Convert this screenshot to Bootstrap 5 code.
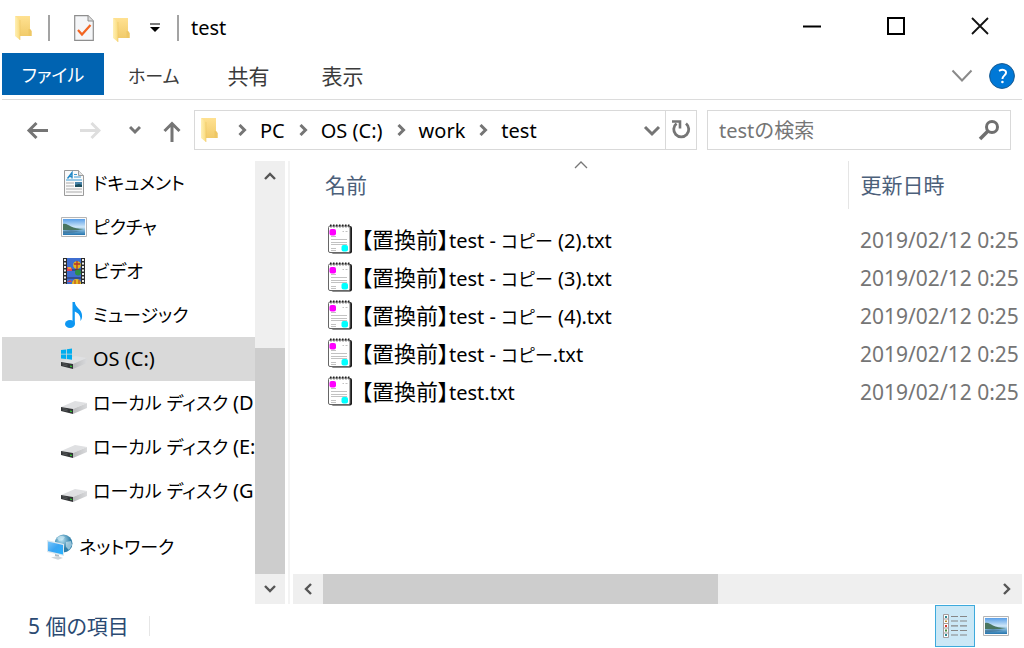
<!DOCTYPE html>
<html lang="ja">
<head>
<meta charset="utf-8">
<meta name="viewport" content="width=device-width, initial-scale=1">
<title>test</title>
<link href="https://cdn.jsdelivr.net/npm/bootstrap@5.3.0/dist/css/bootstrap.min.css" rel="stylesheet">
<style>
  body { font-family: "Noto Sans", "Noto Sans CJK JP", sans-serif; font-size: 20px; line-height: 30px; color: #000; background: #fff; font-feature-settings: "palt"; }
  svg { display: block; flex: none; }
  button { color: inherit; background: none; border: 0; padding: 0; }
  .explorer { padding: 0 2px; }
  .titlebar { height: 53px; padding: 2px 0 0 12px; }
  .title-folder { margin: 4px 18px 0 15px; }
  .rule { width: 2px; height: 26px; background: #a3a3a3; }
  .caption-btn { width: 84px; height: 48px; display: flex; align-items: center; justify-content: center; }
  .ribbon { height: 47px; border-bottom: 1px solid #dcdcdc; color: #3b3b3b; }
  .ribbon a { color: inherit; text-decoration: none; height: 42px; line-height: 46px; }
  .ribbon .file-tab { background: #0063b1; color: #fff; width: 102px; text-align: center; line-height: 44px; }
  .kana { font-size: 18px; }
  .kanji { font-size: 21px; }
  .kanji-wide { font-size: 22px; }
  .latin { font-size: 20px; }
  .address-row { padding: 10px 11px 11px 23px; }
  .nav-buttons { width: 169px; gap: 28px; }
  .boxed { border: 1px solid #d9d9d9; height: 40px; }
  .crumbs { padding-left: 5px; }
  .crumbs a { color: #000; text-decoration: none; padding-top: 2px; }
  .crumbs .sep { margin: 0 12px 0 14px; }
  .refresh { width: 31px; height: 38px; border-left: 1px solid #d9d9d9; display: flex; align-items: center; justify-content: center; }
  .search { width: 304px; padding: 0 10px 0 11px; margin-left: 10px; }
  .search input { border: 0; outline: 0; min-width: 0; background: none; padding: 2px 0 0; color: #000; }
  .search input::placeholder { color: #757575; opacity: 1; }
  .tree { width: 253px; overflow: hidden; }
  .tree a { color: #000; text-decoration: none; height: 44px; display: flex; align-items: center; gap: 6px; padding-left: 59px; white-space: nowrap; }
  .tree a.current { background: #d9d9d9; }
  .tree a.network { margin-top: 12px; padding-left: 45px; }
  .bar { background: #efefef; }
  .bar button { display: flex; align-items: center; justify-content: center; flex: none; width: 30px; height: 30px; }
  .bar-v { width: 30px; }
  .thumb { background: #cdcdcd; }
  .splitter { width: 8px; flex: none; }
  .splitter::before { content: ""; display: block; width: 2px; height: 100%; margin-left: 3px; background: #f3f3f3; }
  .files { table-layout: fixed; width: 100%; white-space: nowrap; margin-bottom: auto; }
  .files th { height: 48px; color: #4c607a; font-weight: 400; padding: 0 0 0 32px; position: relative; }
  .files th.date-col { width: 174px; padding-left: 12px; border-left: 1px solid #e5e5e5; }
  .files td { height: 38px; padding: 0 0 0 34px; }
  .files td span { line-height: 30px; }
  .files .file-name { padding-top: 2px; }
  .files td.date { padding: 2px 0 0 12px; color: #757575; font-size: 21px; }
  .files tbody::before { content: ""; display: block; height: 11px; }
  .sort-mark { position: absolute; top: 0; left: 21px; right: 0; display: flex; justify-content: center; }
  .status { height: 44px; padding-left: 26px; color: #2b4a72; }
  .status .divider { width: 1px; height: 20px; margin-left: 20px; background: #e6e6e6; }
  .views { padding-right: 13px; }
  .view-btn { width: 40px; height: 42px; display: flex; align-items: center; justify-content: center; }
  .view-btn.active { background: #cbe8f6; border: 1px solid #3daadc; }
</style>
</head>
<body>
<svg width="0" height="0" class="position-absolute" aria-hidden="true">
  <defs>
    <linearGradient id="gFold" x1="0" x2="1"><stop offset="0" stop-color="#fff0b5"/><stop offset="1" stop-color="#fadb7d"/></linearGradient>
    <linearGradient id="gBack" x1="0" y1="0" x2="0" y2="1"><stop offset="0" stop-color="#ffe191"/><stop offset="1" stop-color="#f1cb6a"/></linearGradient>
    <linearGradient id="gSky" x1="0" y1="0" x2="0" y2="1"><stop offset="0" stop-color="#5a9fe8"/><stop offset=".5" stop-color="#cfe7f8"/><stop offset=".65" stop-color="#8fc0e0"/><stop offset="1" stop-color="#2474ad"/></linearGradient>
    <linearGradient id="gDisk" x1="0" x2="1"><stop offset="0" stop-color="#b9babc"/><stop offset="1" stop-color="#d9dadc"/></linearGradient>
    <linearGradient id="gScr" x1="0" x2="1" y2="1"><stop offset="0" stop-color="#7cc8fb"/><stop offset=".5" stop-color="#3aa5f3"/><stop offset="1" stop-color="#27b3ff"/></linearGradient>
    <radialGradient id="gGlobe" cx=".4" cy=".3"><stop offset="0" stop-color="#b9e3f3"/><stop offset="1" stop-color="#2f7ea8"/></radialGradient>
    <symbol id="folder" viewBox="0 0 18 26"><path d="M1 1h15v13l1.500 2v5H5z" fill="url(#gBack)"/><path d="M14.500 14h1.500l1.500 2v5h-3z" fill="#eec765"/><path d="M1 1l5 4v20l-5-4z" fill="url(#gFold)"/><path d="M6 5v20" stroke="#ecc767" stroke-width=".6"/></symbol>
    <symbol id="photo" viewBox="0 0 26 20"><path d="M.5.500h25v19H.5z" fill="#fbfbfb" stroke="#b5b5b5"/><path d="M2 2h22v16H2z" fill="url(#gSky)"/><path d="M2 7c3-1 5 1 8 2.500s7 2.500 13 2.500l-6 1H2z" fill="#4a7560"/><path d="M2 14l8-1 10 1-7 1.500L2 16.500z" fill="#376483" opacity=".5"/></symbol>
    <symbol id="disk" viewBox="0 0 26 14"><path d="M0 7l14-6 12 2-14 6z" fill="#dfe0e2"/><path d="M12 9l14-6v5l-14 6z" fill="url(#gDisk)"/><path d="M0 7l12 2v5L0 11z" fill="#333537"/><path d="M1.500 8.500l5 1M1.500 10l5 1" stroke="#66696b" stroke-width=".6"/><path d="M9 10.500l2 .4v1.200l-2-.4z" fill="#2ed12e"/></symbol>
    <symbol id="note" viewBox="0 0 26 30"><rect x="4" y="2" width="21" height="27.500" rx="2" fill="#1b1b1b"/><rect x="1.500" y="2" width="21.500" height="26.500" rx="1.500" fill="#fff" stroke="#666"/><path d="M3 1.500h21" stroke="#222" stroke-width="2" stroke-dasharray="1.500 1.500"/><path d="M3.500 3.500h20" stroke="#999" stroke-dasharray="1 2"/><rect x="2.500" y="5" width="6.500" height="6.500" rx="2" fill="#f0f"/><rect x="14.500" y="21" width="6.500" height="6.500" rx="2" fill="#0ff"/><path d="M15.500 7.500H17m1.500 0h2M4 12.500h5M4 15.500h16M4 18.500h16M4 20.500h16M4 24.500h5M4 26.500h5" stroke="#c2c2c2"/></symbol>
    <symbol id="chev" viewBox="0 0 10 12"><path d="M1.500 1l5 5-5 5" fill="none" stroke="#757575" stroke-width="3"/></symbol>
  </defs>
</svg>

<div class="explorer d-flex flex-column vh-100">
  <header class="titlebar d-flex align-items-center">
    <svg width="18" height="26"><use href="#folder"/></svg>
    <span class="rule ms-3"></span>
    <svg class="ms-4" width="20" height="26" viewBox="0 0 20 26"><path d="M.7.700H14l5.300 5.300v19.300H.7z" fill="#f5f6f8" stroke="#8e8e8e" stroke-width="1.200"/><path d="M14 .7V6h5.300" fill="#ddd" stroke="#8e8e8e"/><path d="M4 15l4 4.500L16.500 10" fill="none" stroke="#f26522" stroke-width="2.200"/></svg>
    <svg class="title-folder" width="22" height="26" viewBox="-3 0 22 26"><use href="#folder" width="18" height="26"/></svg>
    <button type="button" aria-label="クイック アクセス ツール バーのカスタマイズ"><svg width="12" height="10" viewBox="0 0 12 10"><path d="M1 1h10" stroke="#444" stroke-width="1.400"/><path d="M1 4h10L6 9z" fill="#000"/></svg></button>
    <span class="rule ms-3 me-2"></span>
    <span class="ms-1">test</span>
    <div class="ms-auto d-flex align-self-start">
      <button class="caption-btn" type="button" aria-label="最小化"><svg width="20" height="20"><path d="M1 10.500h18" stroke="#000" stroke-width="2"/></svg></button>
      <button class="caption-btn" type="button" aria-label="最大化"><svg width="20" height="20"><path d="M2 2h16v16H2z" fill="none" stroke="#000" stroke-width="2"/></svg></button>
      <button class="caption-btn" type="button" aria-label="閉じる"><svg width="20" height="20"><path d="M2 2l16 16M18 2L2 18" stroke="#111" stroke-width="1.800"/></svg></button>
    </div>
  </header>

  <nav class="ribbon d-flex align-items-start">
    <a class="file-tab kana" href="#">ファイル</a>
    <a class="kana ms-4" href="#">ホーム</a>
    <a class="kanji ms-5" href="#">共有</a>
    <a class="kanji ms-5 ps-1" href="#">表示</a>
    <div class="ms-auto d-flex align-items-center gap-3 h-100" style="padding-right:7px">
      <button type="button" aria-label="リボンの展開"><svg width="22" height="14"><path d="M1.500 1.500L11 11.500l9.500-10" fill="none" stroke="#8a8a8a" stroke-width="2"/></svg></button>
      <button type="button" aria-label="ヘルプ"><svg width="26" height="26" viewBox="0 0 26 26"><circle cx="13" cy="13" r="12.400" fill="#0078d7" stroke="#16588f"/><path d="M10 7.800c4-2.200 7.500-.6 7 2.200-.4 2.400-3.400 2.600-3.600 6" fill="none" stroke="#fff" stroke-width="1.900"/><circle cx="13.400" cy="19" r="1.300" fill="#fff"/></svg></button>
    </div>
  </nav>

  <div class="address-row d-flex align-items-center">
    <div class="nav-buttons d-flex align-items-center flex-shrink-0">
      <button type="button" aria-label="戻る"><svg width="24" height="20"><path d="M23 10.500H4M11.500 3L4 10.500l7.500 7.500" fill="none" stroke="#757575" stroke-width="3"/></svg></button>
      <button type="button" aria-label="進む"><svg width="24" height="20"><path d="M3 10.500h19M14.500 3l7.500 7.500-7.500 7.500" fill="none" stroke="#dedede" stroke-width="3"/></svg></button>
      <button type="button" aria-label="最近表示した場所"><svg width="12" height="10"><path d="M1 2l5 5 5-5" fill="none" stroke="#757575" stroke-width="3"/></svg></button>
      <button type="button" class="pt-1" style="margin-left:-6px" aria-label="上へ"><svg width="18" height="24"><path d="M9 22V4M1.500 11L9 3.500l7.500 7.500" fill="none" stroke="#757575" stroke-width="3"/></svg></button>
    </div>
    <div class="boxed crumbs d-flex align-items-center flex-fill">
      <svg width="18" height="26"><use href="#folder"/></svg>
      <svg class="sep ms-3" width="14" height="12" viewBox="-4 0 14 12"><use href="#chev" width="10" height="12"/></svg>
      <a href="#">PC</a>
      <svg class="sep" width="10" height="12"><use href="#chev"/></svg>
      <a href="#">OS (C:)</a>
      <svg class="sep" width="10" height="12"><use href="#chev"/></svg>
      <a href="#">work</a>
      <svg class="sep" width="10" height="12"><use href="#chev"/></svg>
      <a href="#">test</a>
      <button type="button" class="ms-auto me-1" aria-label="以前の場所"><svg width="18" height="14"><path d="M2 4l7 7 7-7" fill="none" stroke="#757575" stroke-width="3"/></svg></button>
      <button type="button" class="refresh" aria-label="最新の情報に更新"><svg width="20" height="20" viewBox="0 0 20 20"><path d="M15 3.500a7.500 7.500 0 1 1-9.500 0" fill="none" stroke="#757575" stroke-width="2.800"/><path d="M1 1.500h8v7" fill="none" stroke="#757575" stroke-width="2.600"/></svg></button>
    </div>
    <div class="boxed search d-flex align-items-center">
      <input class="flex-fill" type="text" placeholder="testの検索" aria-label="testの検索">
      <svg width="22" height="22"><circle cx="14" cy="8" r="5.500" fill="none" stroke="#6f6f6f" stroke-width="3"/><path d="M10 12l-8 8" stroke="#6f6f6f" stroke-width="3.500"/></svg>
    </div>
  </div>

  <main class="d-flex flex-fill overflow-hidden">
    <nav class="tree flex-shrink-0">
      <a class="kana" href="#"><svg width="26" height="26" viewBox="0 0 26 26"><path d="M3.500.500h14l5 5v20h-19z" fill="#fafafa" stroke="#9b9b9b"/><path d="M17.500.5v5h5" fill="#e3e3e3" stroke="#9b9b9b"/><path d="M6.500 8.500l4.500-6v6M8 6.500h3" fill="none" stroke="#2288c6" stroke-width="1.400"/><path d="M13 4.500h3M13 7h7M5 10h16" stroke="#3d9ad1" stroke-width="1.200"/><path d="M5 13h8M5 16h8M5 19h16M5 22h16" stroke="#aaa" stroke-width="1.200"/><path d="M14 12h7v5h-7z" fill="#4783a9"/><path d="M14 15l4-1 3 1v2h-7z" fill="#1b4d5c"/></svg>ドキュメント</a>
      <a class="kana" href="#"><svg width="26" height="20"><use href="#photo"/></svg>ピクチャ</a>
      <a class="kana" href="#"><svg width="26" height="26" viewBox="0 0 26 26"><path d="M2 0h22v26H2z" fill="#2b2b2b"/><path d="M6 0h14v26H6z" fill="#3f6ed0"/><path d="M4 1v25M22 1v25" stroke="#eee" stroke-width="2" stroke-dasharray="2 1.500"/><path d="M6 12h14M6 20h14" stroke="#223" stroke-width=".8"/><circle cx="16" cy="7" r="3.800" fill="#e2b91e"/><path d="M16 3v8M13 6h6" stroke="#b7322b" stroke-width="1.300"/><path d="M14 11l2 4 2-4z" fill="#8b2b1c"/><circle cx="17" cy="14.500" r="3" fill="#2d8f46"/><path d="M6 9l5 1v3H6z" fill="#e14455"/><path d="M7 10h3" stroke="#f3c332" stroke-width="1.500"/><path d="M11 26a4 4 0 0 1 9-1v1z" fill="#e2b91e"/><path d="M14 22v4M18 22v4" stroke="#b7322b"/><path d="M6 24l3-2 2 2z" fill="#e14455"/></svg>ビデオ</a>
      <a class="kana" href="#"><svg width="26" height="28" viewBox="0 0 26 28"><ellipse cx="9" cy="23" rx="5" ry="4" fill="#0d97f2"/><path d="M11.500 1h2.300c.5 6 7.500 7 7.300 14 0 2-.7 4-1.700 5 .8-5-2-8-5.600-9.500V23h-2.300z" fill="#0d97f2"/></svg>ミュージック</a>
      <a class="current" href="#"><svg width="26" height="22" viewBox="0 0 26 22"><use href="#disk" y="7" width="26" height="14"/><path d="M0 2l5-.6v4.400H0zM5.800 1.300L11 .6v5.200H5.800zM0 6.600h5V11l-5-.6zM5.800 6.600H11v5.200l-5.200-.7z" fill="#00adef"/></svg>OS (C:)</a>
      <a class="kana" href="#"><svg class="mt-2" width="26" height="14"><use href="#disk"/></svg><span>ローカル ディスク <span class="latin">(D</span></span></a>
      <a class="kana" href="#"><svg class="mt-2" width="26" height="14"><use href="#disk"/></svg><span>ローカル ディスク <span class="latin">(E:</span></span></a>
      <a class="kana" href="#"><svg class="mt-2" width="26" height="14"><use href="#disk"/></svg><span>ローカル ディスク <span class="latin">(G</span></span></a>
      <a class="kana network" href="#"><svg width="26" height="26" viewBox="0 0 26 26"><circle cx="16.500" cy="9.500" r="9" fill="url(#gGlobe)"/><path d="M10 4c3-3 6-2 8-1l-2 3-4 1zM19 8l5-1 1 4-3 5-3-3z" fill="#d7eef6" opacity=".6"/><path d="M0 6l17 4v12L0 18z" fill="#dbe8ef"/><path d="M1 7.400l15 3.500v9.500L1 17z" fill="url(#gScr)"/><path d="M8 20l4 1v2l-4-1z" fill="#aebbc4"/><path d="M4 23.500l7-1.500 5 2-5 1.800z" fill="#cfd6db"/></svg>ネットワーク</a>
    </nav>
    <div class="bar bar-v d-flex flex-column flex-shrink-0">
      <button type="button" aria-label="上へスクロール"><svg width="12" height="10"><path d="M1 8l5-5 5 5" fill="none" stroke="#555" stroke-width="2.400"/></svg></button>
      <div class="flex-fill d-flex flex-column justify-content-end"><div class="thumb" style="height:59%"></div></div>
      <button type="button" aria-label="下へスクロール"><svg width="12" height="10"><path d="M1 2l5 5 5-5" fill="none" stroke="#555" stroke-width="2.400"/></svg></button>
    </div>
    <div class="splitter"></div>
    <section class="flex-fill d-flex flex-column overflow-hidden">
      <table class="files">
        <thead><tr>
          <th class="kanji" scope="col"><span class="sort-mark"><svg width="14" height="8"><path d="M1 7l6-6 6 6" fill="none" stroke="#777" stroke-width="1.300"/></svg></span>名前</th>
          <th class="kanji date-col" scope="col">更新日時</th>
        </tr></thead>
        <tbody>
          <tr><td><div class="d-flex align-items-center gap-2"><svg width="26" height="30"><use href="#note"/></svg><span class="file-name"><span class="kanji-wide">【置換前】</span>test - <span class="kana">コピー</span> (2).txt</span></div></td><td class="date">2019/02/12 0:25</td></tr>
          <tr><td><div class="d-flex align-items-center gap-2"><svg width="26" height="30"><use href="#note"/></svg><span class="file-name"><span class="kanji-wide">【置換前】</span>test - <span class="kana">コピー</span> (3).txt</span></div></td><td class="date">2019/02/12 0:25</td></tr>
          <tr><td><div class="d-flex align-items-center gap-2"><svg width="26" height="30"><use href="#note"/></svg><span class="file-name"><span class="kanji-wide">【置換前】</span>test - <span class="kana">コピー</span> (4).txt</span></div></td><td class="date">2019/02/12 0:25</td></tr>
          <tr><td><div class="d-flex align-items-center gap-2"><svg width="26" height="30"><use href="#note"/></svg><span class="file-name"><span class="kanji-wide">【置換前】</span>test - <span class="kana">コピー</span>.txt</span></div></td><td class="date">2019/02/12 0:25</td></tr>
          <tr><td><div class="d-flex align-items-center gap-2"><svg width="26" height="30"><use href="#note"/></svg><span class="file-name"><span class="kanji-wide">【置換前】</span>test.txt</span></div></td><td class="date">2019/02/12 0:25</td></tr>
        </tbody>
      </table>
      <div class="bar d-flex">
        <button type="button" aria-label="左へスクロール"><svg width="10" height="12"><path d="M8 1L3 6l5 5" fill="none" stroke="#555" stroke-width="2.400"/></svg></button>
        <div class="flex-fill d-flex"><div class="thumb" style="width:59%"></div></div>
        <button type="button" aria-label="右へスクロール"><svg width="10" height="12"><path d="M2 1l5 5-5 5" fill="none" stroke="#555" stroke-width="2.400"/></svg></button>
      </div>
    </section>
  </main>

  <footer class="status d-flex align-items-center">
    <span class="kanji">5 個の項目</span>
    <span class="divider"></span>
    <div class="views ms-auto d-flex align-items-center gap-2">
      <button type="button" class="view-btn active" aria-label="詳細"><svg width="26" height="26" viewBox="0 0 26 26"><path d="M1.500 1.500h5v23h-5zM1.500 6h5M1.500 10.500h5M1.500 15h5M1.500 20h5" fill="#fff" stroke="#a39d9d"/><path d="M9 3.500h7m2 0h7M9 8h7m2 0h7M9 12.800h7m2 0h7M9 17.500h7m2 0h7M9 22h7m2 0h7" stroke="#868686" stroke-width="1.200"/><path d="M3 3h2v2H3zM3 21h2v2H3z" fill="#2b8793"/><path d="M3 7.500h2v1.500H3z" fill="#b7892e"/><path d="M3 12h2v2H3z" fill="#d23b2f"/><path d="M3 16.500h2v2H3z" fill="#458a3c"/></svg></button>
      <button type="button" aria-label="大アイコン"><svg width="26" height="20"><use href="#photo"/></svg></button>
    </div>
  </footer>
</div>
<script src="https://cdn.jsdelivr.net/npm/bootstrap@5.3.0/dist/js/bootstrap.bundle.min.js"></script>
</body>
</html>
